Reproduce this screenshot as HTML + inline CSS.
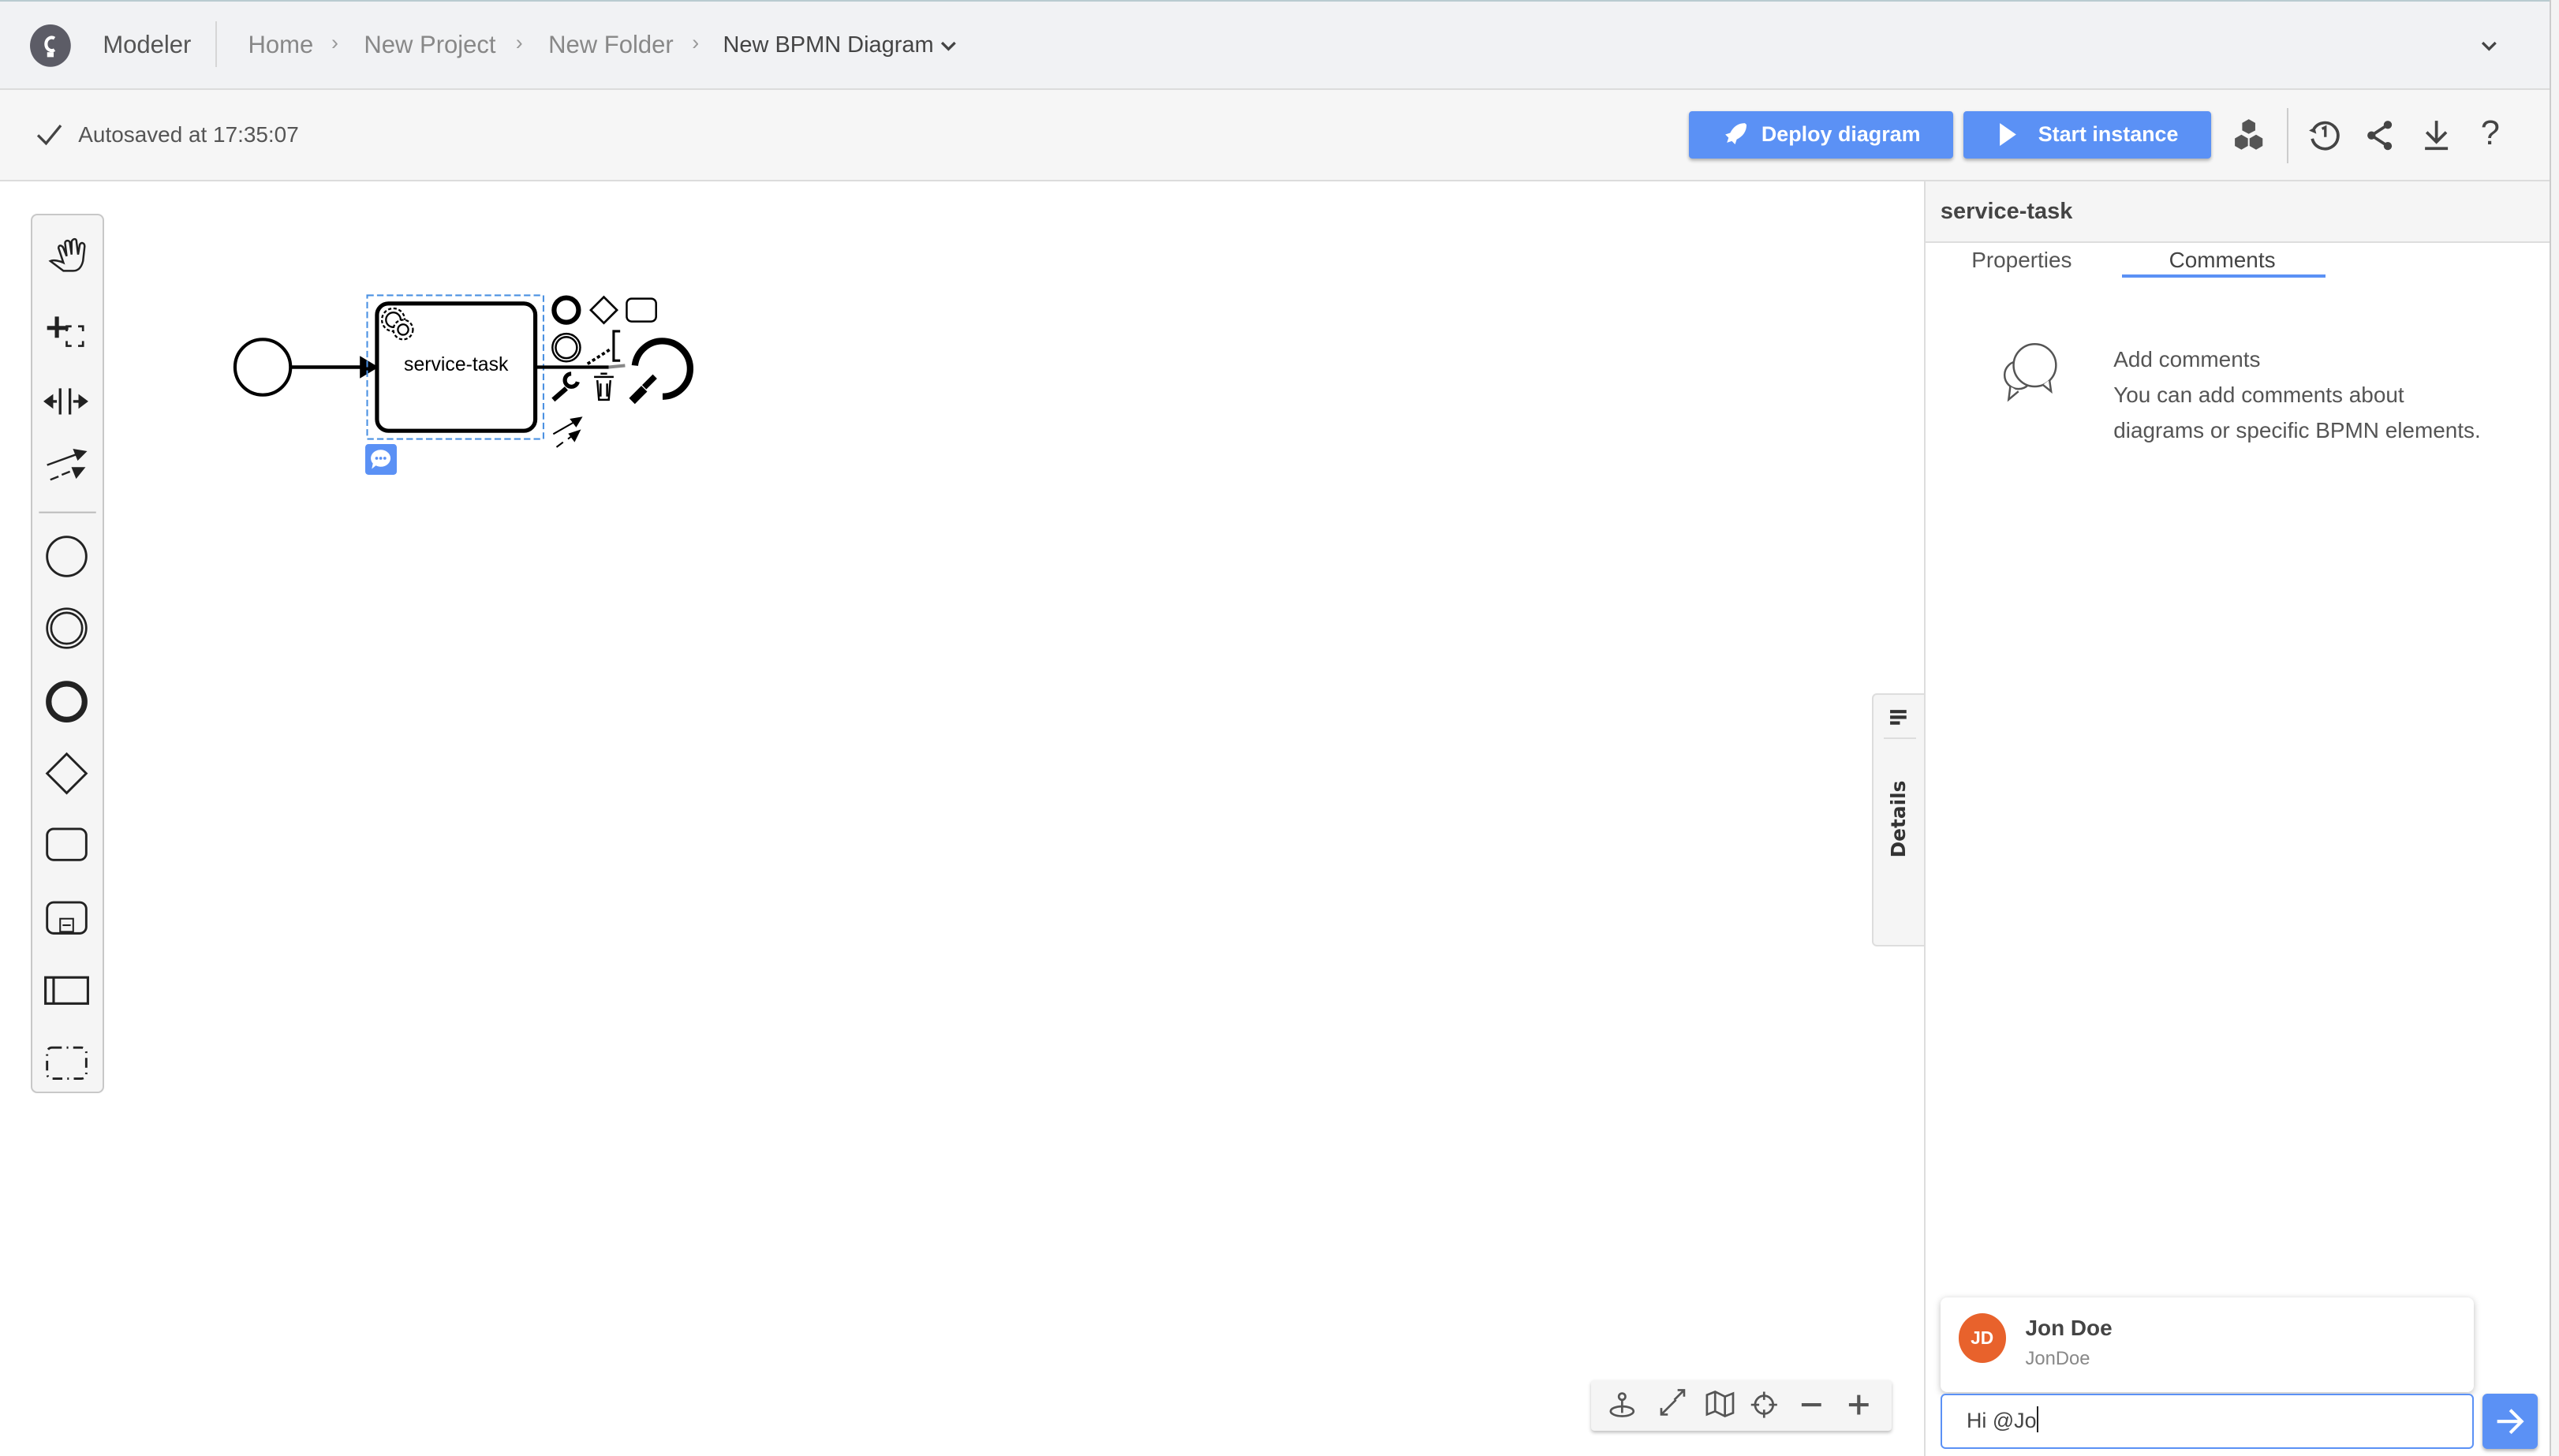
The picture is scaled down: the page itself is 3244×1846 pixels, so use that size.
<!DOCTYPE html>
<html><head><meta charset="utf-8">
<style>
html,body{margin:0;padding:0;width:3244px;height:1846px;overflow:hidden;background:#fff}
#root{zoom:2.0689;width:1568px;height:893px;position:relative;font-family:"Liberation Sans",sans-serif;color:#444;overflow:hidden}
.abs{position:absolute}
.hdr{left:0;top:0;width:1562px;height:55px;background:#f1f2f4;border-bottom:1px solid #dcdcdc;border-top:1px solid #b9cbd0;box-sizing:border-box}
.tb{left:0;top:55px;width:1562px;height:56px;background:#f6f6f6;border-bottom:1px solid #dcdcdc;box-sizing:border-box}
.btn{background:#5b91f5;color:#fff;font-weight:bold;font-size:13px;border-radius:2px;box-shadow:0 1px 2px rgba(0,0,0,.3);display:flex;align-items:center;justify-content:center;gap:8px}
.t15{font-size:15px}
svg{position:absolute;overflow:visible}
</style></head><body><div id="root">

<div class="abs hdr"></div>
<svg style="left:18px;top:15px" width="26" height="26"><ellipse cx="13" cy="13" rx="12.5" ry="13" fill="#5c5c66"/><path d="M15.5 8.5a3.5 4 0 1 0 0 7" stroke="#fff" stroke-width="2" fill="none"/><rect x="11" y="17" width="4" height="3" fill="#fff"/></svg>
<div class="abs t15" style="left:63px;top:19px;color:#555">Modeler</div>
<div class="abs" style="left:132px;top:13px;width:1px;height:28px;background:#d6d6d6"></div>
<div class="abs t15" style="left:152px;top:19px;color:#888">Home</div>
<div class="abs" style="left:203px;top:19px;color:#999;font-size:13px">›</div>
<div class="abs t15" style="left:223px;top:19px;color:#888">New Project</div>
<div class="abs" style="left:316px;top:19px;color:#999;font-size:13px">›</div>
<div class="abs t15" style="left:336px;top:19px;color:#888">New Folder</div>
<div class="abs" style="left:424px;top:19px;color:#999;font-size:13px">›</div>
<div class="abs" style="left:443px;top:20px;color:#444;font-size:14px">New BPMN Diagram</div>
<svg style="left:576px;top:25px" width="10" height="6"><path d="M1 1l4 4 4-4" stroke="#444" stroke-width="1.6" fill="none"/></svg>
<svg style="left:1520px;top:25px" width="10" height="6"><path d="M1 1l4 4 4-4" stroke="#444" stroke-width="1.6" fill="none"/></svg>

<div class="abs tb"></div>
<svg style="left:22px;top:76px" width="16" height="14"><path d="M1 7l5 5L15 1" stroke="#444" stroke-width="1.6" fill="none"/></svg>
<div class="abs" style="left:48px;top:75px;font-size:13.5px;color:#555">Autosaved at 17:35:07</div>
<div class="abs btn" style="left:1035px;top:68px;width:162px;height:29px"><svg style="position:static" width="16" height="16" viewBox="0 0 16 16"><path d="M14 1c-4 0-7 2-9 6l-3 1 2 2-1 3 3-1 2 2 1-3c4-2 6-5 6-9zM10 5a1.2 1.2 0 1 0 .1 0z" fill="#fff"/></svg>Deploy diagram</div>
<div class="abs btn" style="left:1203px;top:68px;width:152px;height:29px"><svg style="position:static" width="14" height="16"><path d="M2 1l10 7-10 7z" fill="#fff"/></svg>&nbsp;Start instance</div>
<svg style="left:1368px;top:72px" width="20" height="22"><path d="M10 1l4 2.3v4.6L10 10 6 7.9V3.3z M5.5 10.5l4 2.3v4.6l-4 2.3-4-2.3v-4.6z M14.5 10.5l4 2.3v4.6l-4 2.3-4-2.3v-4.6z" fill="#555"/></svg>
<div class="abs" style="left:1401px;top:66px;width:1px;height:34px;background:#ccc"></div>
<svg style="left:1414px;top:73px" width="20" height="20"><path d="M4 6A8 8 0 1 1 3 12" stroke="#444" stroke-width="1.8" fill="none"/><path d="M1 7l3.5-2 1 4z" fill="#444"/><path d="M9 6l2-1v6" stroke="#444" stroke-width="1.6" fill="none"/></svg>
<svg style="left:1449px;top:73px" width="18" height="20"><circle cx="14" cy="3.5" r="2.5" fill="#444"/><circle cx="4" cy="10" r="2.5" fill="#444"/><circle cx="14" cy="16.5" r="2.5" fill="#444"/><path d="M14 3.5L4 10l10 6.5" stroke="#444" stroke-width="1.8" fill="none"/></svg>
<svg style="left:1484px;top:73px" width="18" height="20"><path d="M9 1v13M3 8l6 6 6-6M2 18h14" stroke="#444" stroke-width="1.8" fill="none"/></svg>
<div class="abs" style="left:1520px;top:70px;font-size:21px;color:#444">?</div>

<div class="abs" style="left:1562px;top:0;width:6px;height:893px;background:#f3f3f3;border-left:1px solid #ccc"></div>

<div class="abs" style="left:19px;top:131px;width:45px;height:539px;background:#f5f5f5;border:1px solid #c8c8c8;border-radius:4px;box-sizing:border-box"></div>
<svg style="left:19px;top:131px" width="45" height="539" fill="none" stroke="#222" stroke-width="1.5">
<path d="M12 29c2-1 6 0 8 1l-3-9c0-2 2-2 3 0l2 5-1-8c0-2 3-2 3 0l1 7 0-8c1-2 3-2 3 0l1 8 1-6c1-2 3-1 3 1l-1 9c-1 4-3 6-6 6h-6z" stroke-width="1.2"/>
<path d="M10 70h13M16 63v13" stroke-width="2.5"/><path d="M22 72v-3h3M29 69h3v3M32 78v3h-3M25 81h-3v-3" stroke-width="1.3"/>
<path d="M18 107v16M24 107v16M9 115h7M26 115h8" stroke-width="1.6"/><path d="M9 115l4-3v6zM34 115l-4-3v6z" fill="#222"/>
<path d="M10 154l22-8M12 163l5-2M19 160l5-2" stroke-width="1.2"/><path d="M33 146l-6-1 2 5zM32 156l-6 0 2 5z" fill="#222"/>
<line x1="5" y1="183" x2="40" y2="183" stroke="#bbb" stroke-width="1"/>
<circle cx="22" cy="210" r="12" stroke-width="1.4"/>
<circle cx="22" cy="254" r="12" stroke-width="1.3"/><circle cx="22" cy="254" r="9.5" stroke-width="1.3"/>
<circle cx="22" cy="299" r="11" stroke-width="3.5"/>
<path d="M22 331l12 12-12 12-12-12z" stroke-width="1.4"/>
<rect x="10" y="377" width="24" height="19" rx="4" stroke-width="1.4"/>
<rect x="10" y="422" width="24" height="19" rx="4" stroke-width="1.4"/><rect x="18" y="432" width="8" height="8" stroke-width="1"/><path d="M19.5 436h5" stroke-width="1"/>
<rect x="9" y="468" width="26" height="16" stroke-width="1.5"/><path d="M14 468v16" stroke-width="1.5"/>
<rect x="10" y="511" width="24" height="19" rx="3" stroke-width="1.4" stroke-dasharray="6 3 1 3"/>
</svg>

<svg style="left:0;top:0" width="1150" height="880" fill="none" stroke="#000">
<circle cx="161" cy="225" r="17" stroke-width="2"/>
<path d="M178 225h44" stroke-width="2.2"/><path d="M231 225l-10-6v12z" fill="#000"/>
<rect x="225" y="181" width="108" height="88" stroke="#4a90e2" stroke-width="1" stroke-dasharray="4 2"/>
<rect x="231" y="186" width="97" height="78" rx="7" stroke-width="2.5"/>
<g stroke-width="1.1"><circle cx="241" cy="196" r="4.5"/><circle cx="241" cy="196" r="7" stroke-dasharray="2 1.3"/><circle cx="247" cy="202" r="3.5" fill="#fff"/><circle cx="247" cy="202" r="6" stroke-dasharray="2 1.3" fill="#fff"/><circle cx="247" cy="202" r="3.2"/></g>
<path d="M328 225h45" stroke-width="2"/><path d="M373 225l10-1" stroke="#888" stroke-width="2"/>
<circle cx="347" cy="190" r="7.5" stroke-width="3"/>
<path d="M370 182l8 8-8 8-8-8z" stroke-width="1.3"/>
<rect x="384" y="183" width="18" height="14" rx="3" stroke-width="1.2"/>
<circle cx="347" cy="213" r="8.5" stroke-width="1.2"/><circle cx="347" cy="213" r="6.5" stroke-width="1.2"/>
<path d="M360 223l14-9" stroke-width="1.8" stroke-dasharray="2 1.5"/><path d="M380 203h-4v18h4" stroke-width="1.5"/>
<path d="M389 224A17 17 0 1 1 406 243" stroke-width="4"/>
<path d="M339 245l8-7" stroke-width="3"/><path d="M354 234a4 4 0 1 1-4-5" stroke-width="2.5"/>
<path d="M364 231h12M366 233l1 12h6l1-12M368 235v8M372 235v8M368 229h4" stroke-width="1.2"/>
<path d="M386 244l7-7 3 3-7 7z M394 236l6-6 2 2-6 6z" fill="#000" stroke-width="0.8"/>
<path d="M339 266l14-8M341 274l4-3M348 269l4-3" stroke-width="1"/><path d="M356 256l-6 1 3 4zM355 264l-6 2 3 4z" fill="#000"/>
</svg>
<div class="abs" style="left:231px;top:217px;width:97px;text-align:center;font-size:12px;color:#000">service-task</div>
<div class="abs" style="left:224px;top:272px;width:19px;height:19px;background:#5b91f5;border-radius:2px"></div>
<svg style="left:224px;top:272px" width="19" height="19"><path d="M9.5 3.5a6 5.2 0 1 1-3 9.7l-2.5 2 .7-3.3A6 5.2 0 0 1 9.5 3.5z" fill="#fff"/><circle cx="7" cy="8.7" r=".9" fill="#5b91f5"/><circle cx="9.5" cy="8.7" r=".9" fill="#5b91f5"/><circle cx="12" cy="8.7" r=".9" fill="#5b91f5"/></svg>

<div class="abs" style="left:975px;top:846px;width:184px;height:31px;background:#f5f5f5;border-radius:2px;box-shadow:0 1px 2px rgba(0,0,0,.25)"></div>
<svg style="left:975px;top:846px" width="184" height="31" fill="none" stroke="#555" stroke-width="1.3">
<circle cx="19" cy="10" r="2"/><path d="M19 12v8"/><ellipse cx="19" cy="19" rx="7" ry="3"/>
<path d="M43 21l9-9M43 17v4h4M57 10v-4h-4M57 6l-6 6"/>
<path d="M71 9l5-2 6 3 5-2v12l-5 2-6-3-5 2zM76 7v12M82 10v12"/>
<circle cx="106" cy="15" r="5.5"/><path d="M106 7v5M106 18v5M98 15h5M109 15h5"/>
<path d="M129 15h12" stroke-width="2"/><path d="M158 15h12M164 9v12" stroke-width="2"/>
</svg>

<div class="abs" style="left:1147px;top:425px;width:32px;height:155px;background:#f5f5f5;border:1px solid #ddd;border-right:none;border-radius:3px 0 0 3px;box-sizing:border-box"></div>
<svg style="left:1157px;top:434px" width="14" height="12"><path d="M1 2h10M1 5.5h10M1 9h6" stroke="#333" stroke-width="2"/></svg>
<div class="abs" style="left:1154px;top:452px;width:20px;height:1px;background:#ddd"></div>
<div class="abs" style="left:1125px;top:495px;width:76px;text-align:center;transform:rotate(-90deg);font-size:12px;font-weight:bold;color:#333;font-family:'DejaVu Sans',sans-serif">Details</div>

<div class="abs" style="left:1179px;top:111px;width:383px;height:782px;background:#fff;border-left:1px solid #ddd;box-sizing:border-box"></div>
<div class="abs" style="left:1180px;top:111px;width:382px;height:37px;background:#f5f5f5;border-bottom:1px solid #ddd"></div>
<div class="abs" style="left:1189px;top:122px;font-size:14px;font-weight:bold;color:#444">service-task</div>
<div class="abs" style="left:1208px;top:152px;font-size:13.5px;color:#555">Properties</div>
<div class="abs" style="left:1329px;top:152px;font-size:13.5px;color:#444">Comments</div>
<div class="abs" style="left:1300px;top:168px;width:125px;height:2px;background:#5b91f5"></div>
<svg style="left:1226px;top:208px" width="42" height="42" fill="#fff" stroke="#555" stroke-width="1.2"><circle cx="11" cy="22" r="8.5"/><path d="M6 29l-1 8 6-5"/><circle cx="21" cy="16" r="13"/><path d="M26 28l5 4-1-7"/></svg>
<div class="abs" style="left:1295px;top:210px;font-size:13.5px;color:#555;line-height:21.6px">Add comments<br>You can add comments about<br>diagrams or specific BPMN elements.</div>

<div class="abs" style="left:1189px;top:795px;width:327px;height:58px;background:#fff;border-radius:4px;box-shadow:0 1px 4px rgba(0,0,0,.25)"></div>
<div class="abs" style="left:1200px;top:805px;width:29px;height:30px;border-radius:50%;background:#e8622c;color:#fff;font-size:11px;font-weight:bold;text-align:center;line-height:30px">JD</div>
<div class="abs" style="left:1241px;top:806px;font-size:13.5px;font-weight:bold;color:#444">Jon Doe</div>
<div class="abs" style="left:1241px;top:826px;font-size:11.5px;color:#888">JonDoe</div>
<div class="abs" style="left:1189px;top:854px;width:327px;height:34px;border:1px solid #5b91f5;border-radius:3px;box-sizing:border-box;background:#fff"></div>
<div class="abs" style="left:1205px;top:862px;font-size:13px;color:#444">Hi @Jo<span style="border-left:1px solid #222;height:16px;display:inline-block;vertical-align:-3px"></span></div>
<div class="abs" style="left:1521px;top:854px;width:34px;height:34px;background:#5b91f5;border-radius:3px;box-shadow:0 1px 2px rgba(0,0,0,.3)"></div>
<svg style="left:1521px;top:854px" width="34" height="34"><path d="M9 17h15M17 10l7 7-7 7" stroke="#fff" stroke-width="2" fill="none"/></svg>

</div></body></html>
